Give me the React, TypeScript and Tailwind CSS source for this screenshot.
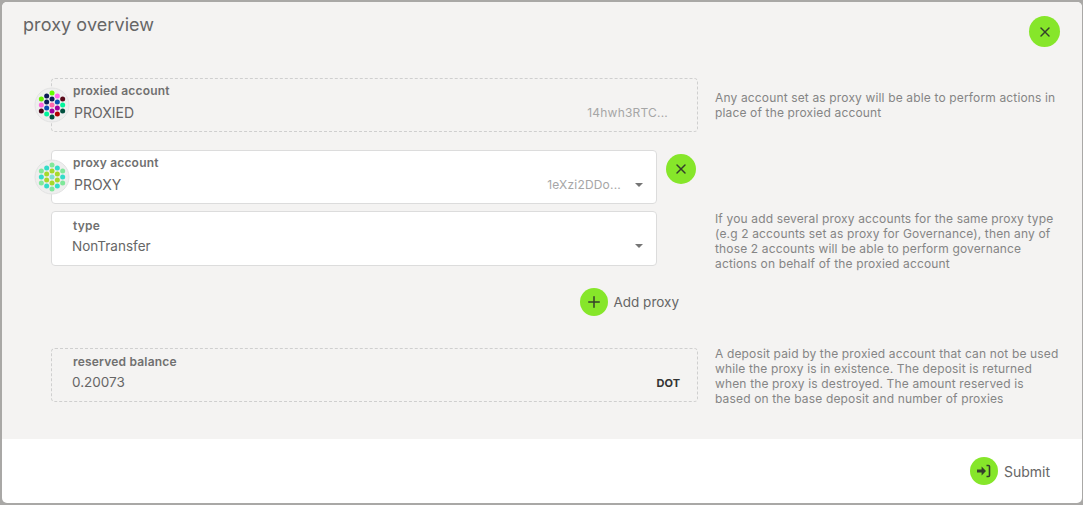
import { X, Plus } from 'lucide-react';

const xs = [-10.67, -5.33, 0, 5.33, 10.67];

// 19 dots, column by column
const layout: [number, number][] = [
  [0, -6], [0, 0], [0, 6],
  [1, -9], [1, -3], [1, 3], [1, 9],
  [2, -12], [2, -6], [2, 0], [2, 6], [2, 12],
  [3, -9], [3, -3], [3, 3], [3, 9],
  [4, -6], [4, 0], [4, 6],
];

const proxiedColors = [
  '#66f000', '#ff66dd', '#4a0a1a',
  '#0b1a55', '#0b1f55', '#0a50b0', '#00f59a',
  '#66ff00', '#0b1f55', '#ff66aa', '#a000a0', '#00503f',
  '#ff66ee', '#0a50b0', '#a000a0', '#b00000',
  '#5a0a1a', '#00f59a', '#00503f',
];

const g = '#7fe89a';
const c = '#33dcc8';
const l = '#a6d92c';
const proxyColors = [g, c, g, c, l, l, c, g, l, '#7fe0cc', l, g, c, l, l, c, g, c, g];

function Identicon({ colors }: { colors: string[] }) {
  return (
    <svg width="36" height="36" viewBox="-18 -18 36 36" className="absolute left-[-18px] top-[8px]">
      <circle cx="0" cy="0" r="17" fill="#eeeeee" stroke="#e2e2e2" />
      {layout.map(([col, y], i) => (
        <circle key={i} cx={xs[col]} cy={y} r="2.5" fill={colors[i]} />
      ))}
    </svg>
  );
}

function GreenButton({ size, children }: { size: string; children: React.ReactNode }) {
  return (
    <div className={`${size} shrink-0 rounded-full bg-[#86e62a] flex items-center justify-center text-[#34402a]`}>
      {children}
    </div>
  );
}

function Caret() {
  return <div className="w-0 h-0 border-l-[4px] border-r-[4px] border-t-[4px] border-l-transparent border-r-transparent border-t-[#757575]" />;
}

function Help({ children }: { children: React.ReactNode }) {
  return <p className="text-[12px] leading-[15px] tracking-[0.15px] text-[#858585]">{children}</p>;
}

export default function App() {
  return (
    <div className="w-[1083px] h-[505px] bg-[#a9a8a6] pt-[2px] pl-[2px] pr-[1px] pb-[2px] font-['Inter',sans-serif]">
      <div className="w-full h-full rounded-[5px] overflow-hidden flex flex-col bg-white">
        {/* Header + form */}
        <div className="h-[437px] bg-[#f4f3f2] flex flex-col">
          <div className="flex justify-between pl-[21px] pr-[22px] pt-[12px] h-[76px]">
            <h1 className="text-[18px] leading-[22px] tracking-[0.08px] text-[#666666]">proxy overview</h1>
            <div className="pt-[2px]">
              <GreenButton size="w-[31px] h-[31px]"><X size={16} strokeWidth={2.2} /></GreenButton>
            </div>
          </div>

          <div className="flex pl-[49px]">
            {/* form column */}
            <div className="w-[647px] shrink-0">
              <div className="relative h-[54px] border border-dashed border-[#cfcfcf] rounded-[4px] pl-[21px] pr-[29px] pt-[4px]">
                <Identicon colors={proxiedColors} />
                <div className="text-[12px] leading-[15px] tracking-[0.2px] font-semibold text-[#707070]">proxied account</div>
                <div className="flex justify-between items-center mt-[5px]">
                  <span className="text-[14px] leading-[20px] text-[#666666] pl-[1px]">PROXIED</span>
                  <span className="text-[12px] text-[#a6a6a6] tracking-[0.2px]">14hwh3RTC...</span>
                </div>
              </div>

              <div className="flex items-start gap-[9px] mt-[18px]">
                <div className="relative w-[606px] h-[54px] bg-white border border-[#dcdcdc] rounded-[4px] pl-[21px] pr-[13px] pt-[4px]">
                  <Identicon colors={proxyColors} />
                  <div className="text-[12px] leading-[15px] tracking-[0.2px] font-semibold text-[#707070]">proxy account</div>
                  <div className="flex justify-between items-center mt-[5px]">
                    <span className="text-[14px] leading-[20px] text-[#666666] pl-[1px]">PROXY</span>
                    <span className="flex items-center gap-[14px]">
                      <span className="text-[12px] text-[#a6a6a6] tracking-[0.2px]">1eXzi2DDo...</span>
                      <Caret />
                    </span>
                  </div>
                </div>
                <div className="pt-[4px]">
                  <GreenButton size="w-[30px] h-[30px]"><X size={16} strokeWidth={2.2} /></GreenButton>
                </div>
              </div>

              <div className="w-[606px] h-[55px] mt-[7px] bg-white border border-[#dcdcdc] rounded-[4px] pl-[20px] pr-[13px] pt-[6px]">
                <div className="text-[12px] leading-[15px] tracking-[0.2px] font-semibold text-[#707070] pl-[1px]">type</div>
                <div className="flex justify-between items-center mt-[3px]">
                  <span className="text-[13.5px] leading-[20px] text-[#666666]">NonTransfer</span>
                  <Caret />
                </div>
              </div>

              <div className="flex justify-end items-center gap-[5px] w-[628px] mt-[22px] h-[28px]">
                <GreenButton size="w-[28px] h-[28px]"><Plus size={18} strokeWidth={2} /></GreenButton>
                <span className="text-[13.5px] text-[#666666]">Add proxy</span>
              </div>

              <div className="h-[54px] mt-[32px] border border-dashed border-[#cfcfcf] rounded-[4px] pl-[20px] pr-[17px] pt-[5px]">
                <div className="text-[12px] leading-[15px] tracking-[0.2px] font-semibold text-[#707070] pl-[1px]">reserved balance</div>
                <div className="flex justify-between items-center mt-[3px]">
                  <span className="text-[13.5px] leading-[20px] text-[#666666]">0.20073</span>
                  <span className="text-[11px] font-bold text-[#333333] pt-[2px]">DOT</span>
                </div>
              </div>
            </div>

            {/* help column */}
            <div className="w-[350px] ml-[17px] shrink-0 flex flex-col">
              <div className="mt-[12px]">
                <Help>Any account set as proxy will be able to perform actions in<br />place of the proxied account</Help>
              </div>
              <div className="mt-[91px]">
                <Help>If you add several proxy accounts for the same proxy type<br />(e.g 2 accounts set as proxy for Governance), then any of<br />those 2 accounts will be able to perform governance<br />actions on behalf of the proxied account</Help>
              </div>
              <div className="mt-[75px]">
                <Help>A deposit paid by the proxied account that can not be used<br />while the proxy is in existence. The deposit is returned<br />when the proxy is destroyed. The amount reserved is<br />based on the base deposit and number of proxies</Help>
              </div>
            </div>
          </div>
        </div>

        {/* Footer */}
        <div className="flex-1 flex justify-end items-center gap-[6px] pr-[32px]">
          <GreenButton size="w-[28px] h-[28px]">
            <svg width="15" height="14" viewBox="0 0 15 14" fill="none">
              <path d="M1 5.4h4.6V2.6L10 7l-4.4 4.4V8.6H1z" fill="currentColor" />
              <path d="M10.5 1.5h2a1 1 0 0 1 1 1v9a1 1 0 0 1-1 1h-2" stroke="currentColor" strokeWidth="1.6" />
            </svg>
          </GreenButton>
          <span className="text-[14px] text-[#666666]">Submit</span>
        </div>
      </div>
    </div>
  );
}
